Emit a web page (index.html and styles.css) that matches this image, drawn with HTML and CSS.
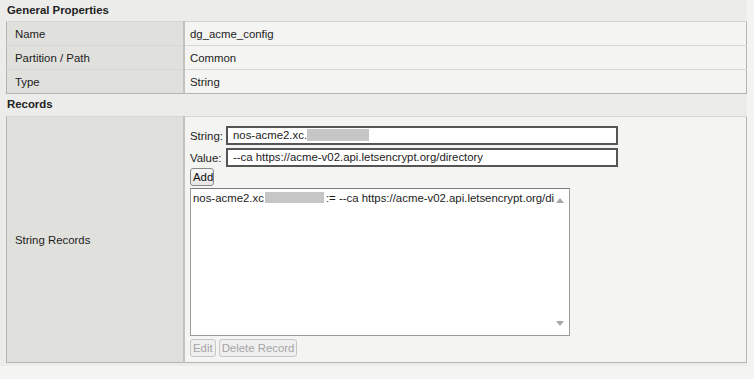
FILE: index.html
```html
<!DOCTYPE html>
<html lang="en">
<head>
    <meta charset="UTF-8">
    <title>Data Group List - dg_acme_config</title>
    <link rel="stylesheet" href="styles.css">
</head>
<body>
    <div class="page">
        <div class="section-title">General Properties</div>
        <table class="props">
            <tr>
                <td class="label">Name</td>
                <td class="value">dg_acme_config</td>
            </tr>
            <tr>
                <td class="label">Partition / Path</td>
                <td class="value">Common</td>
            </tr>
            <tr>
                <td class="label">Type</td>
                <td class="value">String</td>
            </tr>
        </table>

        <div class="section-title records-title">Records</div>
        <table class="props">
            <tr class="records-row">
                <td class="label">String Records</td>
                <td class="value records-cell">
                    <div class="record-fields">
                        <label>String:</label>
                        <div class="text-input">nos-acme2.xc.<span class="redacted redacted-input"></span></div>
                        <label>Value:</label>
                        <div class="text-input">--ca https://acme-v02.api.letsencrypt.org/directory</div>
                    </div>
                    <button class="btn add-btn">Add</button>
                    <div class="record-list">
                        <div class="record-line">nos-acme2.xc<span class="redacted redacted-list"></span>:= --ca https://acme-v02.api.letsencrypt.org/di</div>
                        <span class="scroll-arrow up"></span>
                        <span class="scroll-arrow down"></span>
                    </div>
                    <div class="list-actions">
                        <button class="btn" disabled>Edit</button>
                        <button class="btn" disabled>Delete Record</button>
                    </div>
                </td>
            </tr>
        </table>
    </div>
</body>
</html>
```

FILE: styles.css
```css
body {
    margin: 0;
    background: #f4f4f2;
    font-family: 'Liberation Sans', Arial, sans-serif;
    font-size: 11.4px;
    color: #1c1c1c;
}
.page {
    padding: 0 0 3px 6px;
    width: 741px;
    background: #ececea;
}
.section-title {
    height: 21px;
    line-height: 20px;
    padding-left: 1px;
    font-weight: bold;
    color: #222;
}
.records-title {
    height: 22px;
    line-height: 21px;
}
.props {
    width: 741px;
    border-collapse: collapse;
    border: 1px solid #b4b4b0;
}
.props td {
    height: 23px;
    padding: 0;
    border-top: 1px solid #d6d6d2;
}
.props .label {
    width: 168px;
    padding-left: 8px;
    background: #e0e0dc;
    border-right: 2px solid #c2c2be;
}
.props .value {
    padding-left: 5px;
    background: #f4f4f2;
}
.records-row td {
    height: 245px;
}
.records-cell {
    vertical-align: top;
}
.record-fields {
    display: grid;
    grid-template-columns: 36px 392px;
    row-gap: 3px;
    margin-top: 9px;
    align-items: center;
}
.text-input {
    height: 15px;
    line-height: 15px;
    padding-left: 5px;
    border: 2px solid #555;
    background: #fff;
    white-space: nowrap;
}
.redacted {
    display: inline-block;
    vertical-align: middle;
    background: #c6c6c6;
}
.redacted-input {
    width: 62px;
    height: 12px;
    margin-top: -2px;
}
.redacted-list {
    width: 59px;
    height: 11px;
    margin: -2px 2px 0 1px;
}
.btn {
    font-family: inherit;
    font-size: 11.4px;
    height: 18px;
    padding: 0 2px;
    margin: 0;
    color: #111;
    background: linear-gradient(#f6f6f6, #e6e6e6);
    border: 1px solid #8a8a8a;
    border-radius: 3px;
}
.btn:disabled {
    color: #a6a6a6;
    border-color: #c6c6c6;
    background: #efefef;
}
.add-btn {
    display: block;
    margin-top: 1px;
    width: 24px;
}
.record-list {
    position: relative;
    width: 378px;
    height: 146px;
    margin-top: 2px;
    border: 1px solid #9c9c9c;
    border-top-color: #7a7a7a;
    background: #fff;
}
.record-line {
    margin: 3px 0 0 2px;
    white-space: nowrap;
}
.scroll-arrow {
    position: absolute;
    right: 5px;
    width: 0;
    height: 0;
    border-left: 4px solid transparent;
    border-right: 4px solid transparent;
}
.scroll-arrow.up {
    top: 9px;
    border-bottom: 5px solid #a8a8a8;
}
.scroll-arrow.down {
    bottom: 9px;
    border-top: 5px solid #a8a8a8;
}
.list-actions {
    display: flex;
    gap: 3px;
    margin-top: 3px;
}
```
